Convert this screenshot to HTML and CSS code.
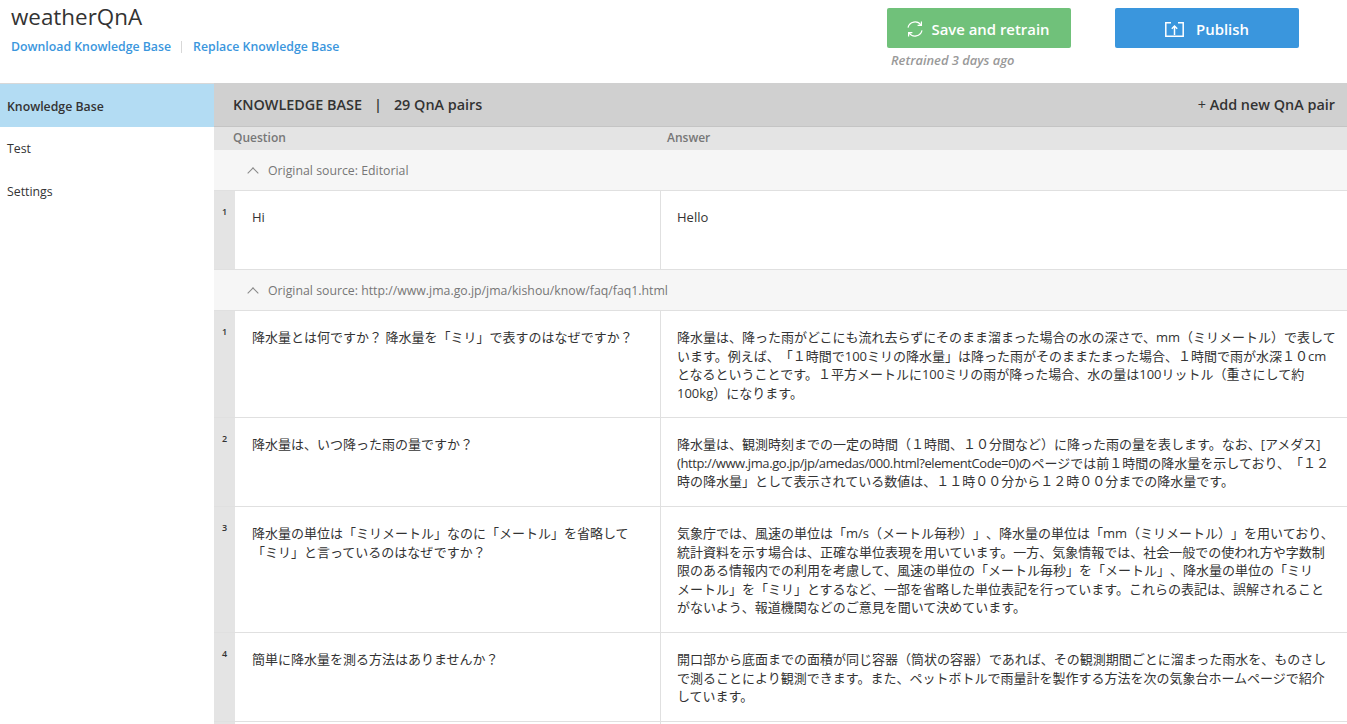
FILE: index.html
```html
<!DOCTYPE html>
<html lang="ja">
<head>
  <title>weatherQnA</title>
  <link rel="stylesheet" href="styles.css">
</head>
<body>
  <header class="top">
    <div class="title_block">
      <p class="kb_name">weatherQnA</p>
      <p class="kb_links"><a class="link">Download Knowledge Base</a><span class="sep"></span><a class="link">Replace Knowledge Base</a></p>
    </div>
    <div class="actions">
      <div class="action_col">
        <button class="btn green">
          <svg class="icon" width="18" height="18" viewBox="0 0 18 18" fill="none" stroke="currentColor" stroke-width="1.2"><path d="M2 7.6A7.2 7.2 0 0 1 15 5.2"/><path d="M15.4 1.6v3.8h-3.8"/><path d="M16 10.4A7.2 7.2 0 0 1 3 12.8"/><path d="M2.6 16.400v-3.800h3.800"/></svg>
          Save and retrain
        </button>
        <p class="retrained">Retrained 3 days ago</p>
      </div>
      <button class="btn blue">
        <svg class="icon" width="19" height="15" viewBox="0 0 19 15" fill="none" stroke="currentColor" stroke-width="1.500"><path d="M6 .8H.8v13.400h17.400V.8H13"/><path d="M9.500 13V4"/><path d="M6.800 6.800l2.700-2.800 2.700 2.800"/></svg>
        Publish
      </button>
    </div>
  </header>

  <div class="main">
    <nav class="side">
      <a class="side_item active">Knowledge Base</a>
      <a class="side_item">Test</a>
      <a class="side_item">Settings</a>
    </nav>

    <section class="content">
      <div class="kb_bar">
        <span>KNOWLEDGE BASE<span class="bar_sep">|</span>29 QnA pairs</span>
        <span><span class="plus">+</span> Add new QnA pair</span>
      </div>
      <div class="col_heads">
        <span class="col_q">Question</span>
        <span>Answer</span>
      </div>

      <div class="source"><span class="chev"></span>Original source: Editorial</div>
      <div class="row r78">
        <div class="num">1</div>
        <div class="q">Hi</div>
        <div class="a">Hello</div>
      </div>

      <div class="source"><span class="chev"></span>Original source: http://www.jma.go.jp/jma/kishou/know/faq/faq1.html</div>
      <div class="row r106">
        <div class="num">1</div>
        <div class="q">降水量とは何ですか？ 降水量を「ミリ」で表すのはなぜですか？</div>
        <div class="a">降水量は、降った雨がどこにも流れ去らずにそのまま溜まった場合の水の深さで、mm（ミリメートル）で表して<br>います。例えば、「１時間で100ミリの降水量」は降った雨がそのままたまった場合、１時間で雨が水深１０cm<br>となるということです。１平方メートルに100ミリの雨が降った場合、水の量は100リットル（重さにして約<br>100kg）になります。</div>
      </div>
      <div class="row r88">
        <div class="num">2</div>
        <div class="q">降水量は、いつ降った雨の量ですか？</div>
        <div class="a">降水量は、観測時刻までの一定の時間（１時間、１０分間など）に降った雨の量を表します。なお、[アメダス]<br><span class="url">(http://www.jma.go.jp/jp/amedas/000.html?elementCode=0)</span>のページでは前１時間の降水量を示しており、「１２<br>時の降水量」として表示されている数値は、１１時００分から１２時００分までの降水量です。</div>
      </div>
      <div class="row r125">
        <div class="num">3</div>
        <div class="q">降水量の単位は「ミリメートル」なのに「メートル」を省略して「ミリ」と言っているのはなぜですか？</div>
        <div class="a">気象庁では、風速の単位は「m/s（メートル毎秒）」、降水量の単位は「mm（ミリメートル）」を用いており、<br>統計資料を示す場合は、正確な単位表現を用いています。一方、気象情報では、社会一般での使われ方や字数制<br>限のある情報内での利用を考慮して、風速の単位の「メートル毎秒」を「メートル」、降水量の単位の「ミリ<br>メートル」を「ミリ」とするなど、一部を省略した単位表記を行っています。これらの表記は、誤解されること<br>がないよう、報道機関などのご意見を聞いて決めています。</div>
      </div>
      <div class="row r88">
        <div class="num">4</div>
        <div class="q">簡単に降水量を測る方法はありませんか？</div>
        <div class="a">開口部から底面までの面積が同じ容器（筒状の容器）であれば、その観測期間ごとに溜まった雨水を、ものさし<br>で測ることにより観測できます。また、ペットボトルで雨量計を製作する方法を次の気象台ホームページで紹介<br>しています。</div>
      </div>
      <div class="row r88">
        <div class="num"></div>
        <div class="q"></div>
        <div class="a"></div>
      </div>
    </section>
  </div>
</body>
</html>
```

FILE: styles.css
```css
body {
  margin: 0;
  background-color: white;
  color: #333;
  font-family: "Open Sans", "Noto Sans CJK JP", sans-serif;
  font-size: 13px;
  line-height: 18.6px;
  text-spacing-trim: space-all;
}
p {
  margin: 0;
}

/* header */
.top {
  display: flex;
  justify-content: space-between;
  height: 83px;
  box-sizing: border-box;
}
.title_block {
  padding: 3px 0 0 11px;
}
.kb_name {
  font-size: 22.4px;
  line-height: 28px;
  color: #333;
}
.kb_links {
  display: flex;
  align-items: center;
  margin-top: 8px;
  font-size: 12.3px;
  font-weight: 600;
  line-height: 16px;
}
.link {
  color: #3a96dd;
}
.sep {
  width: 1px;
  height: 12px;
  margin: 0 11px 0 10px;
  background-color: #d8d8d8;
}
.actions {
  display: flex;
  align-items: flex-start;
  gap: 44px;
  padding: 8px 48px 0 0;
}
.btn {
  display: flex;
  align-items: center;
  justify-content: center;
  width: 184px;
  height: 40px;
  padding: 2px 0 0;
  border: 0;
  border-radius: 2px;
  color: white;
  font-family: inherit;
  font-size: 14.9px;
  font-weight: 600;
}
.icon {
  margin-right: 7px;
}
.green {
  background-color: #70c17a;
}
.green .icon {
  margin-left: -2px;
}
.blue {
  background-color: #3a96dd;
}
.blue .icon {
  margin-right: 12px;
}
.retrained {
  margin: 3px 0 0 4px;
  font-size: 12.9px;
  font-style: italic;
  font-weight: 600;
  line-height: 18px;
  color: #999;
}

/* layout */
.main {
  display: flex;
  height: 641px;
  overflow: hidden;
}
.side {
  width: 214px;
  flex: none;
  border-top: 1px solid #d8d8d8;
  box-sizing: border-box;
}
.side_item {
  display: flex;
  align-items: center;
  height: 43px;
  padding-left: 7px;
  padding-top: 1px;
  box-sizing: border-box;
  font-size: 12.3px;
}
.active {
  background-color: #b3dcf3;
  padding-top: 4px;
  font-weight: 600;
}
.content {
  flex: 1;
  min-width: 0;
}

/* table top */
.kb_bar {
  display: flex;
  justify-content: space-between;
  align-items: center;
  height: 41px;
  padding: 2px 12px 0 19px;
  background-color: #d0d0d0;
  border-bottom: 1px solid #c4c4c4;
  font-size: 14.4px;
  font-weight: 600;
  color: #333;
}
.bar_sep {
  margin: 0 12px;
}
.plus {
  font-weight: 400;
}
.col_heads {
  display: flex;
  height: 23px;
  align-items: center;
  padding-left: 19px;
  background-color: #e4e4e4;
  font-size: 12px;
  font-weight: 600;
  color: #777;
}
.col_q {
  width: 434px;
}

/* rows */
.source {
  display: flex;
  align-items: center;
  height: 41px;
  padding: 2px 0 0 33px;
  box-sizing: border-box;
  background-color: #f6f6f6;
  border-bottom: 1px solid #e0e0e0;
  font-size: 12.3px;
  color: #777;
}
.chev {
  width: 7px;
  height: 7px;
  margin: 4px 11px 0 2px;
  border-top: 1px solid #888;
  border-left: 1px solid #888;
  transform: rotate(45deg);
}
.row {
  display: grid;
  grid-template-columns: 21px 425px 1fr;
  border-bottom: 1px solid #e0e0e0;
}
.r78 { height: 78px; }
.r106 { height: 106px; }
.r88 { height: 88px; }
.r125 { height: 125px; }
.num {
  padding: 13px 0 0 8px;
  background-color: #e4e4e4;
  font-size: 9px;
  font-weight: 600;
  line-height: 16px;
}
.q {
  padding: 17px 24px 0 17px;
}
.a {
  padding: 17px 0 0 16px;
  border-left: 1px solid #e0e0e0;
  white-space: nowrap;
  overflow: hidden;
}
.url {
  letter-spacing: -0.4px;
}
```
